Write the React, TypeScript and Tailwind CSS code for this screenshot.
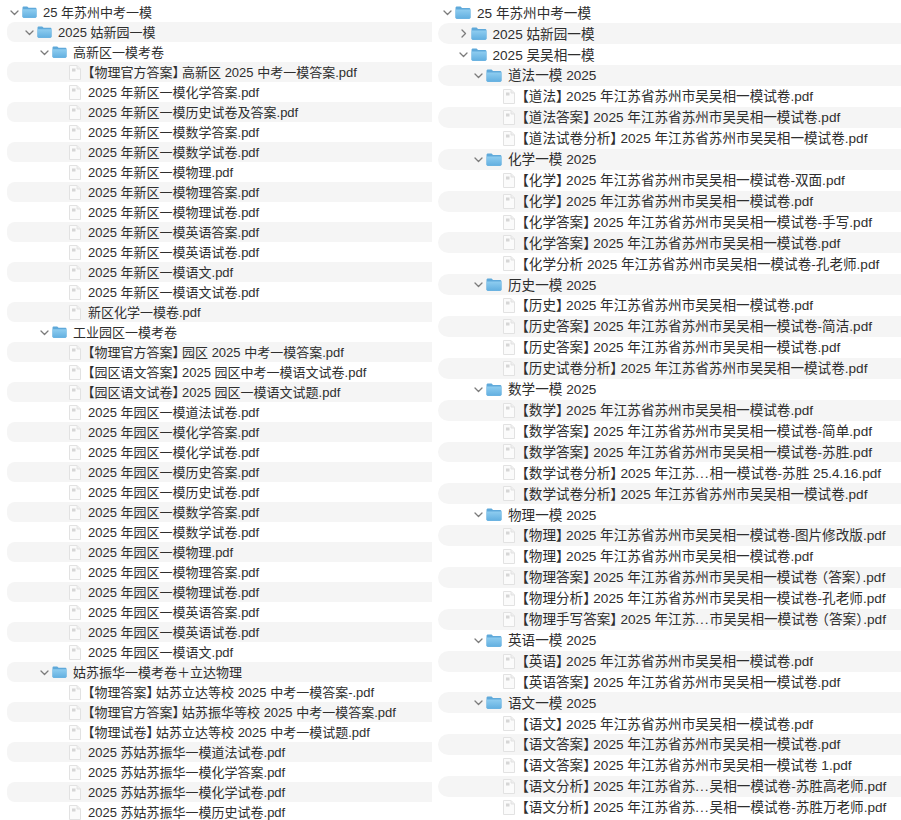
const LEFT_NAMES = [
  ['25 年苏州中考一模', 0],
  ['2025 姑新园一模', 1],
  ['高新区一模考卷', 2],
  ['【物理官方答案】高新区 2025 中考一模答案.pdf', 3],
  ['2025 年新区一模化学答案.pdf', 3],
  ['2025 年新区一模历史试卷及答案.pdf', 3],
  ['2025 年新区一模数学答案.pdf', 3],
  ['2025 年新区一模数学试卷.pdf', 3],
  ['2025 年新区一模物理.pdf', 3],
  ['2025 年新区一模物理答案.pdf', 3],
  ['2025 年新区一模物理试卷.pdf', 3],
  ['2025 年新区一模英语答案.pdf', 3],
  ['2025 年新区一模英语试卷.pdf', 3],
  ['2025 年新区一模语文.pdf', 3],
  ['2025 年新区一模语文试卷.pdf', 3],
  ['新区化学一模卷.pdf', 3],
  ['工业园区一模考卷', 2],
  ['【物理官方答案】园区 2025 中考一模答案.pdf', 3],
  ['【园区语文答案】2025 园区中考一模语文试卷.pdf', 3],
  ['【园区语文试卷】2025 园区一模语文试题.pdf', 3],
  ['2025 年园区一模道法试卷.pdf', 3],
  ['2025 年园区一模化学答案.pdf', 3],
  ['2025 年园区一模化学试卷.pdf', 3],
  ['2025 年园区一模历史答案.pdf', 3],
  ['2025 年园区一模历史试卷.pdf', 3],
  ['2025 年园区一模数学答案.pdf', 3],
  ['2025 年园区一模数学试卷.pdf', 3],
  ['2025 年园区一模物理.pdf', 3],
  ['2025 年园区一模物理答案.pdf', 3],
  ['2025 年园区一模物理试卷.pdf', 3],
  ['2025 年园区一模英语答案.pdf', 3],
  ['2025 年园区一模英语试卷.pdf', 3],
  ['2025 年园区一模语文.pdf', 3],
  ['姑苏振华一模考卷＋立达物理', 2],
  ['【物理答案】姑苏立达等校 2025 中考一模答案-.pdf', 3],
  ['【物理官方答案】姑苏振华等校 2025 中考一模答案.pdf', 3],
  ['【物理试卷】姑苏立达等校 2025 中考一模试题.pdf', 3],
  ['2025 苏姑苏振华一模道法试卷.pdf', 3],
  ['2025 苏姑苏振华一模化学答案.pdf', 3],
  ['2025 苏姑苏振华一模化学试卷.pdf', 3],
  ['2025 苏姑苏振华一模历史试卷.pdf', 3],
] as const

const P = '2025 年江苏省苏州市吴吴相一模试卷'

const RIGHT_NAMES = [
  ['25 年苏州中考一模', 0],
  ['2025 姑新园一模', 1, true],
  ['2025 吴吴相一模', 1],
  ['道法一模 2025', 2],
  [`【道法】${P}.pdf`, 3],
  [`【道法答案】${P}.pdf`, 3],
  [`【道法试卷分析】${P}.pdf`, 3],
  ['化学一模 2025', 2],
  [`【化学】${P}-双面.pdf`, 3],
  [`【化学】${P}.pdf`, 3],
  [`【化学答案】${P}-手写.pdf`, 3],
  [`【化学答案】${P}.pdf`, 3],
  [`【化学分析 ${P}-孔老师.pdf`, 3],
  ['历史一模 2025', 2],
  [`【历史】${P}.pdf`, 3],
  [`【历史答案】${P}-简洁.pdf`, 3],
  [`【历史答案】${P}.pdf`, 3],
  [`【历史试卷分析】${P}.pdf`, 3],
  ['数学一模 2025', 2],
  [`【数学】${P}.pdf`, 3],
  [`【数学答案】${P}-简单.pdf`, 3],
  [`【数学答案】${P}-苏胜.pdf`, 3],
  ['【数学试卷分析】2025 年江苏...相一模试卷-苏胜 25.4.16.pdf', 3],
  [`【数学试卷分析】${P}.pdf`, 3],
  ['物理一模 2025', 2],
  [`【物理】${P}-图片修改版.pdf`, 3],
  [`【物理】${P}.pdf`, 3],
  [`【物理答案】${P}（答案）.pdf`, 3],
  [`【物理分析】${P}-孔老师.pdf`, 3],
  ['【物理手写答案】2025 年江苏...市吴吴相一模试卷（答案）.pdf', 3],
  ['英语一模 2025', 2],
  [`【英语】${P}.pdf`, 3],
  [`【英语答案】${P}.pdf`, 3],
  ['语文一模 2025', 2],
  [`【语文】${P}.pdf`, 3],
  [`【语文答案】${P}.pdf`, 3],
  [`【语文答案】${P} 1.pdf`, 3],
  ['【语文分析】2025 年江苏省苏...吴相一模试卷-苏胜高老师.pdf', 3],
  ['【语文分析】2025 年江苏省苏...吴相一模试卷-苏胜万老师.pdf', 3],
] as const

const LEFT_INDENT = ['pl-0', 'pl-[15px]', 'pl-[30px]', 'pl-[62px]']
const RIGHT_INDENT = ['pl-[2px]', 'pl-[17.5px]', 'pl-[33px]', 'pl-[65px]']

function Folder({ id, className }: { id: string; className: string }) {
  return (
    <svg viewBox="0 0 15 13" preserveAspectRatio="none" className={`shrink-0 ${className}`}>
      <defs>
        <linearGradient id={id} x1="0" y1="0" x2="0" y2="1">
          <stop offset="0" stopColor="#8fcdf0" />
          <stop offset="1" stopColor="#62afe0" />
        </linearGradient>
      </defs>
      <path d="M0.5 2C0.5 1 1 0.5 2 0.5H5.2L6.6 2H13C14 2 14.5 2.5 14.5 3.5V11.5C14.5 12.2 14 12.7 13.3 12.7H1.7C1 12.7 0.5 12.2 0.5 11.5Z" fill="#5fa9da" />
      <path d="M0.5 3.4H14.5V11.5C14.5 12.2 14 12.7 13.3 12.7H1.7C1 12.7 0.5 12.2 0.5 11.5Z" fill={`url(#${id})`} />
    </svg>
  )
}

function PdfFile() {
  return (
    <svg width="12" height="15" viewBox="0 0 12 15" className="shrink-0">
      <path d="M0.5 0.5H8L11.5 4V14.5H0.5Z" fill="#fbfbfb" stroke="#e2e2e2" />
      <path d="M8 0.5V4H11.5" fill="#eeeeee" stroke="#e2e2e2" />
      <rect x="3" y="3.5" width="3.5" height="3" fill="#d6d6d6" />
    </svg>
  )
}

function Chevron({ closed }: { closed?: boolean }) {
  return (
    <span className="w-[15px] shrink-0 flex items-center justify-center">
      <svg width="9" height="9" viewBox="0 0 9 9" fill="none" stroke="#7c7c7c" strokeWidth="1.3" strokeLinecap="round" strokeLinejoin="round">
        {closed ? <path d="M3 1L6.5 4.5L3 8" /> : <path d="M1 3L4.5 6.5L8 3" />}
      </svg>
    </span>
  )
}

// brackets sit tighter in the Finder font than in Noto, and its dots are wider
function Label({ name }: { name: string }) {
  return (
    <>
      {name.split(/(】|卷(?=（)|）|\.\.\.)/).map((part, i) => {
        if (part === '】') return <span key={i} className="tracking-[-3.5px]">{part}</span>
        if (part === '卷') return <span key={i} className="tracking-[-3px]">{part}</span>
        if (part === '）') return <span key={i} className="tracking-[-6.5px]">{part}</span>
        if (part === '...') return <span key={i} className="tracking-[1px]">{part}</span>
        return part
      })}
    </>
  )
}

type Entry = readonly [string, number, boolean?]

interface FileTreeProps {
  rows: readonly Entry[]
  indent: string[]
  rowClass: string
  folderClass: string
  prefix: string
}

function FileTree({ rows, indent, rowClass, folderClass, prefix }: FileTreeProps) {
  return (
    <div>
      {rows.map(([name, depth, closed], i) => (
        <div
          key={i}
          className={`flex items-center whitespace-nowrap ${rowClass} ${indent[depth]} ${i % 2 === 1 ? 'bg-[#f5f5f5]' : ''}`}
        >
          {depth < 3 ? (
            <>
              <Chevron closed={closed} />
              <Folder id={`${prefix}${i}`} className={folderClass} />
              <span className="ml-[6px] pt-[2px]">{name}</span>
            </>
          ) : (
            <>
              <PdfFile />
              <span className="ml-[7px] pt-[2px] [text-spacing-trim:trim-start]">
                <Label name={name} />
              </span>
            </>
          )}
        </div>
      ))}
    </div>
  )
}

export default function App() {
  return (
    <div className="flex h-[820px] overflow-hidden bg-white text-[#2e2e2e] font-['Liberation_Sans','Noto_Sans_CJK_SC',sans-serif]">
      <div className="w-[425px] ml-[7px] pt-[2px] shrink-0">
        <FileTree
          rows={LEFT_NAMES}
          indent={LEFT_INDENT}
          rowClass="h-[20px] rounded-l-lg text-[13px]"
          folderClass="w-[15px] h-[12px]"
          prefix="l"
        />
      </div>
      <div className="flex-1 ml-[6px] pt-[2.5px]">
        <FileTree
          rows={RIGHT_NAMES}
          indent={RIGHT_INDENT}
          rowClass="h-[20.91px] rounded-l-xl text-[13.6px]"
          folderClass="w-[16px] h-[13px]"
          prefix="r"
        />
      </div>
    </div>
  )
}
